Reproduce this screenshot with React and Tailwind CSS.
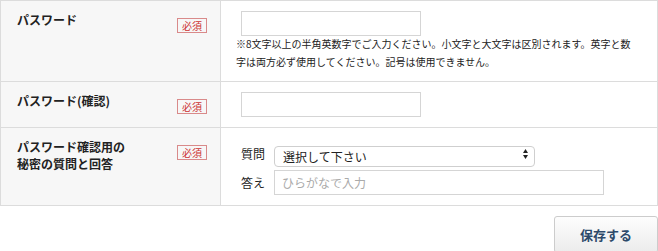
import React from "react";

function Badge() {
  return (
    <span className="mt-[17px] inline-block shrink-0 border border-[#d98a8a] px-[4px] text-[10px] leading-[13px] text-[#cc3333]">
      必須
    </span>
  );
}

function LabelCell({ children }) {
  return (
    <div className="flex w-[220px] shrink-0 items-start justify-between border-r border-[#dcdcdc] bg-[#f7f7f7] pl-[16px] pr-[13px]">
      <div className="pt-[10px] text-[12px] font-bold leading-[17px] text-[#222]">{children}</div>
      <Badge />
    </div>
  );
}

export default function App() {
  return (
    <div
      className="w-[658px] bg-white text-[#333]"
      style={{ fontFamily: '"Noto Sans CJK JP", "Noto Sans", sans-serif' }}
    >
      <div className="border border-[#dcdcdc]">
        {/* Row 1 */}
        <div className="flex border-b border-[#dcdcdc]">
          <LabelCell>パスワード</LabelCell>
          <div className="flex-1 pb-[10px] pl-[15px] pr-[20px] pt-[10px]">
            <input
              type="password"
              className="ml-[5px] block h-[25px] w-[180px] border border-[#d5d5d5] bg-white outline-none"
            />
            <p className="-mt-[1px] text-[10px] leading-[18px] text-[#222]">
              ※8文字以上の半角英数字でご入力ください。小文字と大文字は区別されます。英字と数字は両方必ず使用してください。記号は使用できません。
            </p>
          </div>
        </div>
        {/* Row 2 */}
        <div className="flex border-b border-[#dcdcdc]">
          <LabelCell>パスワード(確認)</LabelCell>
          <div className="flex-1 py-[10px] pl-[20px]">
            <input
              type="password"
              className="block h-[25px] w-[180px] border border-[#d5d5d5] bg-white outline-none"
            />
          </div>
        </div>
        {/* Row 3 */}
        <div className="flex">
          <LabelCell>
            パスワード確認用の
            <br />
            秘密の質問と回答
          </LabelCell>
          <div className="flex flex-1 flex-col gap-[6px] pb-[10px] pl-[20px] pt-[15px]">
            <div className="flex items-center gap-[9px]">
              <span className="w-[24px] text-[12px] leading-[17px] text-[#222]">質問</span>
              <div className="relative h-[21px] w-[261px]">
                <select className="h-full w-full appearance-none rounded-[4px] border border-[#cfcfcf] bg-white pl-[8px] text-[12px] leading-[19px] text-[#222] outline-none">
                  <option>選択して下さい</option>
                </select>
                <svg
                  className="pointer-events-none absolute right-[7px] top-[6px]"
                  width="5"
                  height="10"
                  viewBox="0 0 5 10"
                >
                  <path d="M2.5 0 L5 4 L0 4 Z" fill="#222" />
                  <path d="M0 6 L5 6 L2.5 10 Z" fill="#222" />
                </svg>
              </div>
            </div>
            <div className="flex items-center gap-[9px]">
              <span className="w-[24px] text-[12px] leading-[17px] text-[#222]">答え</span>
              <input
                type="text"
                placeholder="ひらがなで入力"
                className="h-[25px] w-[330px] border border-[#d5d5d5] bg-white px-[7px] text-[12px] text-[#222] outline-none placeholder:text-[#aaaaaa]"
              />
            </div>
          </div>
        </div>
      </div>
      <div className="mt-[10px] flex justify-end">
        <button className="h-[37px] w-[104px] rounded-[3px] border border-[#cccccc] bg-gradient-to-b from-[#fdfdfd] to-[#ececec] text-[13px] font-bold text-[#2d4a6b]">
          保存する
        </button>
      </div>
    </div>
  );
}
